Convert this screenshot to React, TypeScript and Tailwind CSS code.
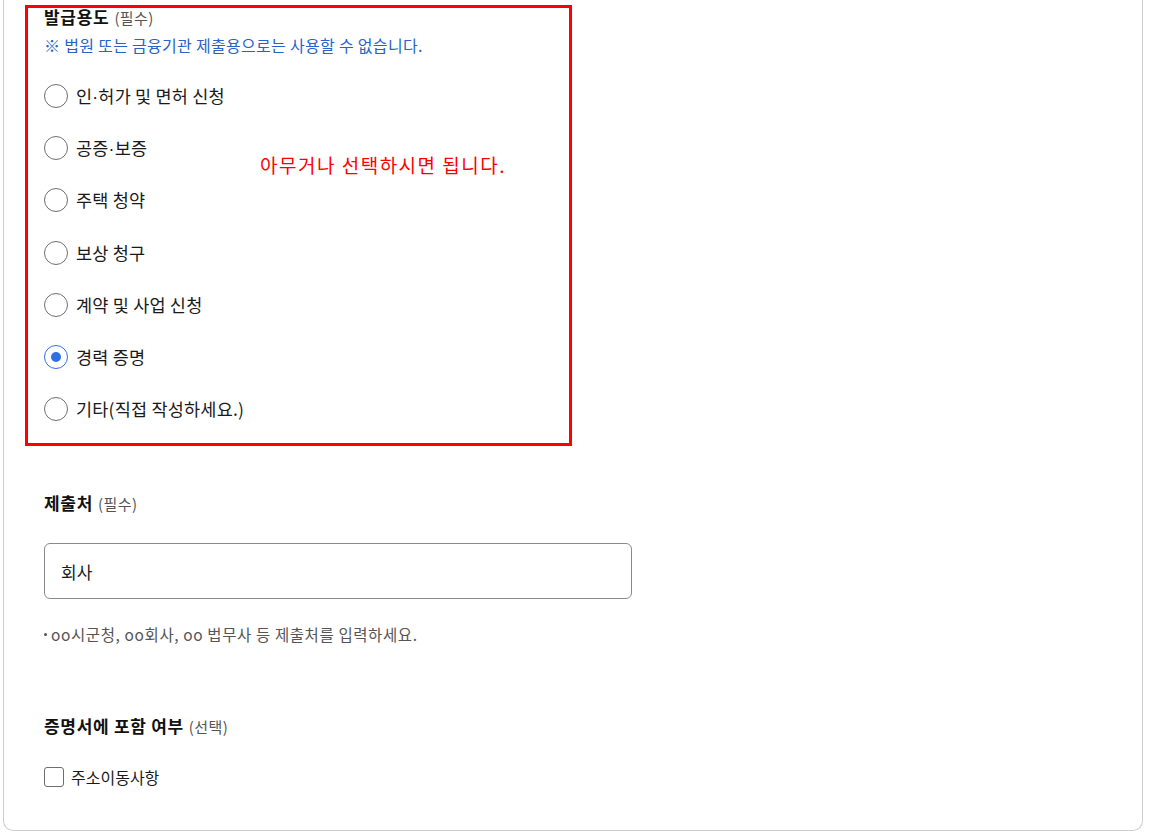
import React from "react";

const font = { fontFamily: '"Noto Sans CJK KR", "Noto Sans", sans-serif' };

const options = [
  "인·허가 및 면허 신청",
  "공증·보증",
  "주택 청약",
  "보상 청구",
  "계약 및 사업 신청",
  "경력 증명",
  "기타(직접 작성하세요.)",
];

function withDot(s: string) {
  const parts = s.split("·");
  return parts.map((p, i) => (
    <React.Fragment key={i}>
      {i > 0 && <span style={{ fontFamily: '"Liberation Sans", sans-serif' }}>·</span>}
      {p}
    </React.Fragment>
  ));
}

function Radio({ checked }: { checked: boolean }) {
  return checked ? (
    <span className="flex h-[24px] w-[24px] shrink-0 items-center justify-center rounded-full border-[1.5px] border-[#2f6fe4]">
      <span className="h-[10px] w-[10px] rounded-full bg-[#2f6fe4]" />
    </span>
  ) : (
    <span className="h-[24px] w-[24px] shrink-0 rounded-full border border-[#6f6f6f]" />
  );
}

function Title({ main, sub }: { main: string; sub: string }) {
  return (
    <div className="flex items-baseline gap-[5px] leading-[24px]">
      <span className="text-[17px] font-bold tracking-[0.7px] text-[#111]">{main}</span>
      <span className="text-[15px] tracking-[0.4px] text-[#555]">{sub}</span>
    </div>
  );
}

export default function App() {
  return (
    <div className="relative min-h-[839px] w-[1163px] bg-white text-[#111]" style={font}>
      <div className="ml-[3px] w-[1140px] rounded-b-[10px] border-x border-b border-[#cdcdcd] pb-[41px] pl-[40px] pt-[5px]">
        <Title main="발급용도" sub="(필수)" />
        <div className="mt-[4px] text-[16px] leading-[22px] tracking-[0.3px] text-[#2a62c9]">
          ※ 법원 또는 금융기관 제출용으로는 사용할 수 없습니다.
        </div>
        <div className="mt-[14px] flex flex-col">
          {options.map((o, i) => (
            <label key={o} className="flex h-[52.2px] items-center gap-[8px]">
              <Radio checked={i === 5} />
              <span className="text-[17.5px] leading-[24px] tracking-[0.2px] text-[#1a1a1a]">{withDot(o)}</span>
            </label>
          ))}
        </div>

        <div className="mt-[56px]">
          <Title main="제출처" sub="(필수)" />
        </div>
        <div className="mt-[27px] flex h-[56px] w-[588px] items-center rounded-[6px] border border-[#8a8a8a] px-[16px]">
          <span className="text-[17px] text-[#1a1a1a]">회사</span>
        </div>
        <div className="mt-[25px] flex items-center gap-[4px] text-[15.5px] leading-[20px] tracking-[0.6px] text-[#555]">
          <span className="h-[3px] w-[3px] rounded-full bg-[#555]" />
          <span>oo시군청, oo회사, oo 법무사 등 제출처를 입력하세요.</span>
        </div>

        <div className="mt-[70px]">
          <Title main="증명서에 포함 여부" sub="(선택)" />
        </div>
        <label className="mt-[26px] flex h-[24px] items-center gap-[7px]">
          <span className="h-[20px] w-[20px] rounded-[3px] border border-[#6f6f6f]" />
          <span className="text-[16px] text-[#1a1a1a]">주소이동사항</span>
        </label>
      </div>

      <div className="pointer-events-none absolute left-[25px] top-[5px] h-[441px] w-[547px] border-[3px] border-[#ff0000]" />
      <div className="absolute left-[260px] top-[151px] text-[19px] leading-[28px] tracking-[1.5px] text-[#ff0000]">
        아무거나 선택하시면 됩니다.
      </div>
    </div>
  );
}
